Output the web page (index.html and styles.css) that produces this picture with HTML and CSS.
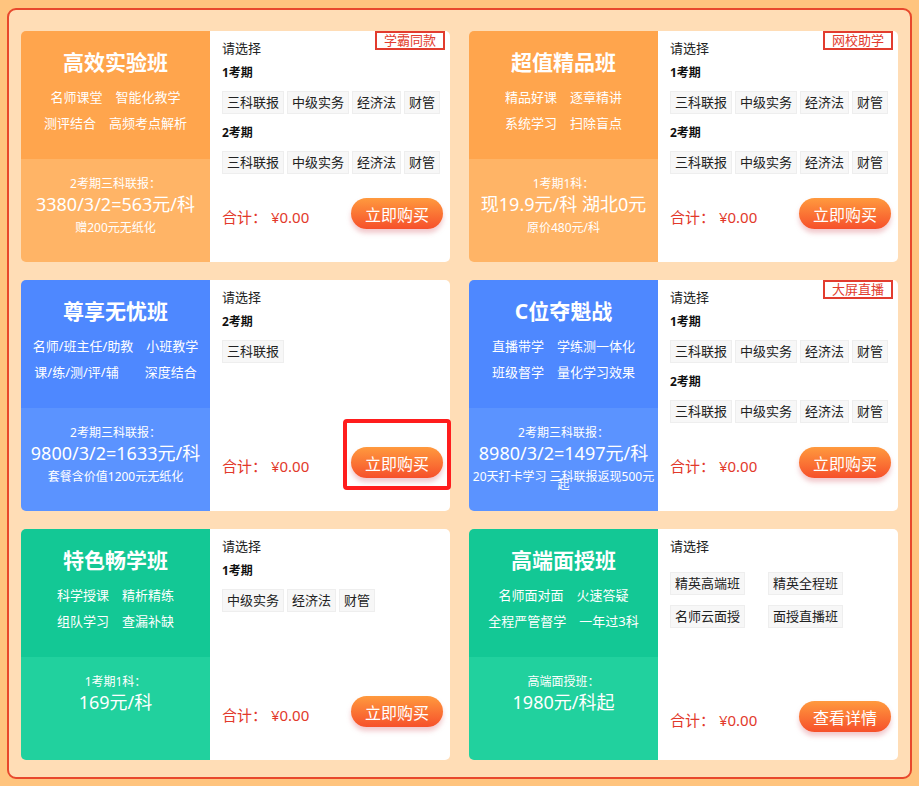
FILE: index.html
```html
<!doctype html>
<html>
<head>
    <meta charset="utf-8" />
    <title>班型选择</title>
    <link rel="stylesheet" href="styles.css">
</head>
<body>
<div class="wrap">
  <div class="grid">

    <div class="card orange">
      <div class="side">
        <div class="side-top">
          <h3 class="name">高效实验班</h3>
          <div class="feat"><span>名师课堂</span><span>智能化教学</span></div>
          <div class="feat"><span>测评结合</span><span>高频考点解析</span></div>
        </div>
        <div class="side-bot">
          <p class="cap">2考期三科联报：</p>
          <p class="price">3380/3/2=563元/科</p>
          <p class="note">赠200元无纸化</p>
        </div>
      </div>
      <div class="main">
        <span class="badge">学霸同款</span>
        <div class="choose">请选择</div>
        <div class="group">
          <div class="period">1考期</div>
          <div class="tags"><span class="tag">三科联报</span><span class="tag">中级实务</span><span class="tag">经济法</span><span class="tag">财管</span></div>
        </div>
        <div class="group">
          <div class="period">2考期</div>
          <div class="tags"><span class="tag">三科联报</span><span class="tag">中级实务</span><span class="tag">经济法</span><span class="tag">财管</span></div>
        </div>
        <div class="foot"><span class="total">合计： ¥0.00</span><button class="buy">立即购买</button></div>
      </div>
    </div>

    <div class="card orange">
      <div class="side">
        <div class="side-top">
          <h3 class="name">超值精品班</h3>
          <div class="feat"><span>精品好课</span><span>逐章精讲</span></div>
          <div class="feat"><span>系统学习</span><span>扫除盲点</span></div>
        </div>
        <div class="side-bot">
          <p class="cap">1考期1科：</p>
          <p class="price">现19.9元/科 湖北0元</p>
          <p class="note">原价480元/科</p>
        </div>
      </div>
      <div class="main">
        <span class="badge">网校助学</span>
        <div class="choose">请选择</div>
        <div class="group">
          <div class="period">1考期</div>
          <div class="tags"><span class="tag">三科联报</span><span class="tag">中级实务</span><span class="tag">经济法</span><span class="tag">财管</span></div>
        </div>
        <div class="group">
          <div class="period">2考期</div>
          <div class="tags"><span class="tag">三科联报</span><span class="tag">中级实务</span><span class="tag">经济法</span><span class="tag">财管</span></div>
        </div>
        <div class="foot"><span class="total">合计： ¥0.00</span><button class="buy">立即购买</button></div>
      </div>
    </div>

    <div class="card blue">
      <div class="side">
        <div class="side-top">
          <h3 class="name">尊享无忧班</h3>
          <div class="feat"><span>名师/班主任/助教</span><span>小班教学</span></div>
          <div class="feat wide"><span>课/练/测/评/辅</span><span>深度结合</span></div>
        </div>
        <div class="side-bot">
          <p class="cap">2考期三科联报：</p>
          <p class="price">9800/3/2=1633元/科</p>
          <p class="note">套餐含价值1200元无纸化</p>
        </div>
      </div>
      <div class="main">
        <div class="choose">请选择</div>
        <div class="group">
          <div class="period">2考期</div>
          <div class="tags"><span class="tag">三科联报</span></div>
        </div>
        <div class="foot"><span class="total">合计： ¥0.00</span><button class="buy">立即购买</button></div>
        <div class="mark"></div>
      </div>
    </div>

    <div class="card blue">
      <div class="side">
        <div class="side-top">
          <h3 class="name">C位夺魁战</h3>
          <div class="feat"><span>直播带学</span><span>学练测一体化</span></div>
          <div class="feat"><span>班级督学</span><span>量化学习效果</span></div>
        </div>
        <div class="side-bot">
          <p class="cap">2考期三科联报：</p>
          <p class="price">8980/3/2=1497元/科</p>
          <p class="note">20天打卡学习 三科联报返现500元起</p>
        </div>
      </div>
      <div class="main">
        <span class="badge">大屏直播</span>
        <div class="choose">请选择</div>
        <div class="group">
          <div class="period">1考期</div>
          <div class="tags"><span class="tag">三科联报</span><span class="tag">中级实务</span><span class="tag">经济法</span><span class="tag">财管</span></div>
        </div>
        <div class="group">
          <div class="period">2考期</div>
          <div class="tags"><span class="tag">三科联报</span><span class="tag">中级实务</span><span class="tag">经济法</span><span class="tag">财管</span></div>
        </div>
        <div class="foot"><span class="total">合计： ¥0.00</span><button class="buy">立即购买</button></div>
      </div>
    </div>

    <div class="card green">
      <div class="side">
        <div class="side-top">
          <h3 class="name">特色畅学班</h3>
          <div class="feat"><span>科学授课</span><span>精析精练</span></div>
          <div class="feat"><span>组队学习</span><span>查漏补缺</span></div>
        </div>
        <div class="side-bot">
          <p class="cap">1考期1科：</p>
          <p class="price">169元/科</p>
        </div>
      </div>
      <div class="main">
        <div class="choose">请选择</div>
        <div class="group">
          <div class="period">1考期</div>
          <div class="tags"><span class="tag">中级实务</span><span class="tag">经济法</span><span class="tag">财管</span></div>
        </div>
        <div class="foot"><span class="total">合计： ¥0.00</span><button class="buy">立即购买</button></div>
      </div>
    </div>

    <div class="card green">
      <div class="side">
        <div class="side-top">
          <h3 class="name">高端面授班</h3>
          <div class="feat"><span>名师面对面</span><span>火速答疑</span></div>
          <div class="feat"><span>全程严管督学</span><span>一年过3科</span></div>
        </div>
        <div class="side-bot">
          <p class="cap">高端面授班：</p>
          <p class="price">1980元/科起</p>
        </div>
      </div>
      <div class="main">
        <div class="choose">请选择</div>
        <div class="tags cols">
          <span class="tag">精英高端班</span><span class="tag">精英全程班</span>
          <span class="tag">名师云面授</span><span class="tag">面授直播班</span>
        </div>
        <div class="foot low"><span class="total">合计： ¥0.00</span><button class="buy">查看详情</button></div>
      </div>
    </div>

  </div>
</div>
</body>
</html>
```

FILE: styles.css
```css
html, body  { margin:0; background:#ffc47e; font-family:"Noto Sans", "Noto Sans CJK SC", sans-serif; }
p, h3       { margin:0; }

.wrap       { margin:8px 7px 0 7px; border:2px solid #e8482c; border-radius:9px; background:#ffddb6; padding:21px 12px 17px 12px; }
.grid       { display:grid; grid-template-columns:429px 429px; column-gap:19px; row-gap:18px; }

.card       { display:flex; height:231px; }
.side       { width:189px; flex:none; display:flex; flex-direction:column; color:#fff; text-align:center; border-radius:5px 0 0 5px; overflow:hidden; }
.side-top   { height:128px; padding-top:17px; box-sizing:border-box; }
.side-bot   { flex:1; padding:16px 3px 0 3px; }

.orange .side-top { background:#ffa54d; }
.orange .side-bot { background:#ffb466; }
.blue .side-top   { background:#4e88ff; }
.blue .side-bot   { background:#5b93ff; }
.green .side-top  { background:#13c895; }
.green .side-bot  { background:#21d19e; }

.name       { font-size:21px; line-height:28px; font-weight:bold; margin-bottom:8px; }
.feat       { display:flex; justify-content:center; gap:13px; font-size:13px; line-height:26px; }
.feat.wide  { gap:26px; }

.cap        { font-size:12px; line-height:18px; }
.price      { font-size:18px; line-height:22px; }
.note       { font-size:12px; line-height:8px; margin-top:9px; }

.main       { flex:1; position:relative; background:#fff; border-radius:0 5px 5px 0; padding:8px 0 0 12px; display:flex; flex-direction:column; color:#222; }
.badge      { position:absolute; top:0; right:5px; border:2px solid #e23c2e; color:#e23c2e; background:#fff; font-size:13px; line-height:15px; padding:0 7px; }
.choose     { font-size:13px; line-height:18px; }
.group      { margin-top:7px; }
.group + .group { margin-top:10px; }
.period     { font-size:12px; line-height:18px; font-weight:bold; color:#111; }

.tags       { display:flex; gap:3px; margin-top:9px; }
.tag        { font-size:13px; line-height:21px; padding:0 4px; border:1px solid #eee; background:#f7f7f7; white-space:nowrap; }
.tags.cols  { display:grid; grid-template-columns:98px 98px; row-gap:10px; justify-items:start; margin-top:17px; gap:10px 0; }

.foot       { margin-top:auto; padding:0 7px 33px 0; display:flex; align-items:center; justify-content:space-between; }
.foot.low   { padding-bottom:28px; }
.total      { color:#e2392b; font-size:15px; padding-top:5px; }
.buy        { width:92px; height:31px; border:none; border-radius:16px; color:#fff; font-family:inherit; font-size:16px; background:linear-gradient(#ff9a3e, #f6502b); box-shadow:0 4px 5px rgba(214, 96, 110, 0.35); padding:0; }

.mark       { position:absolute; left:133px; top:139px; width:108px; height:71px; box-sizing:border-box; border:4px solid #ff1d1d; border-radius:4px; }
```
